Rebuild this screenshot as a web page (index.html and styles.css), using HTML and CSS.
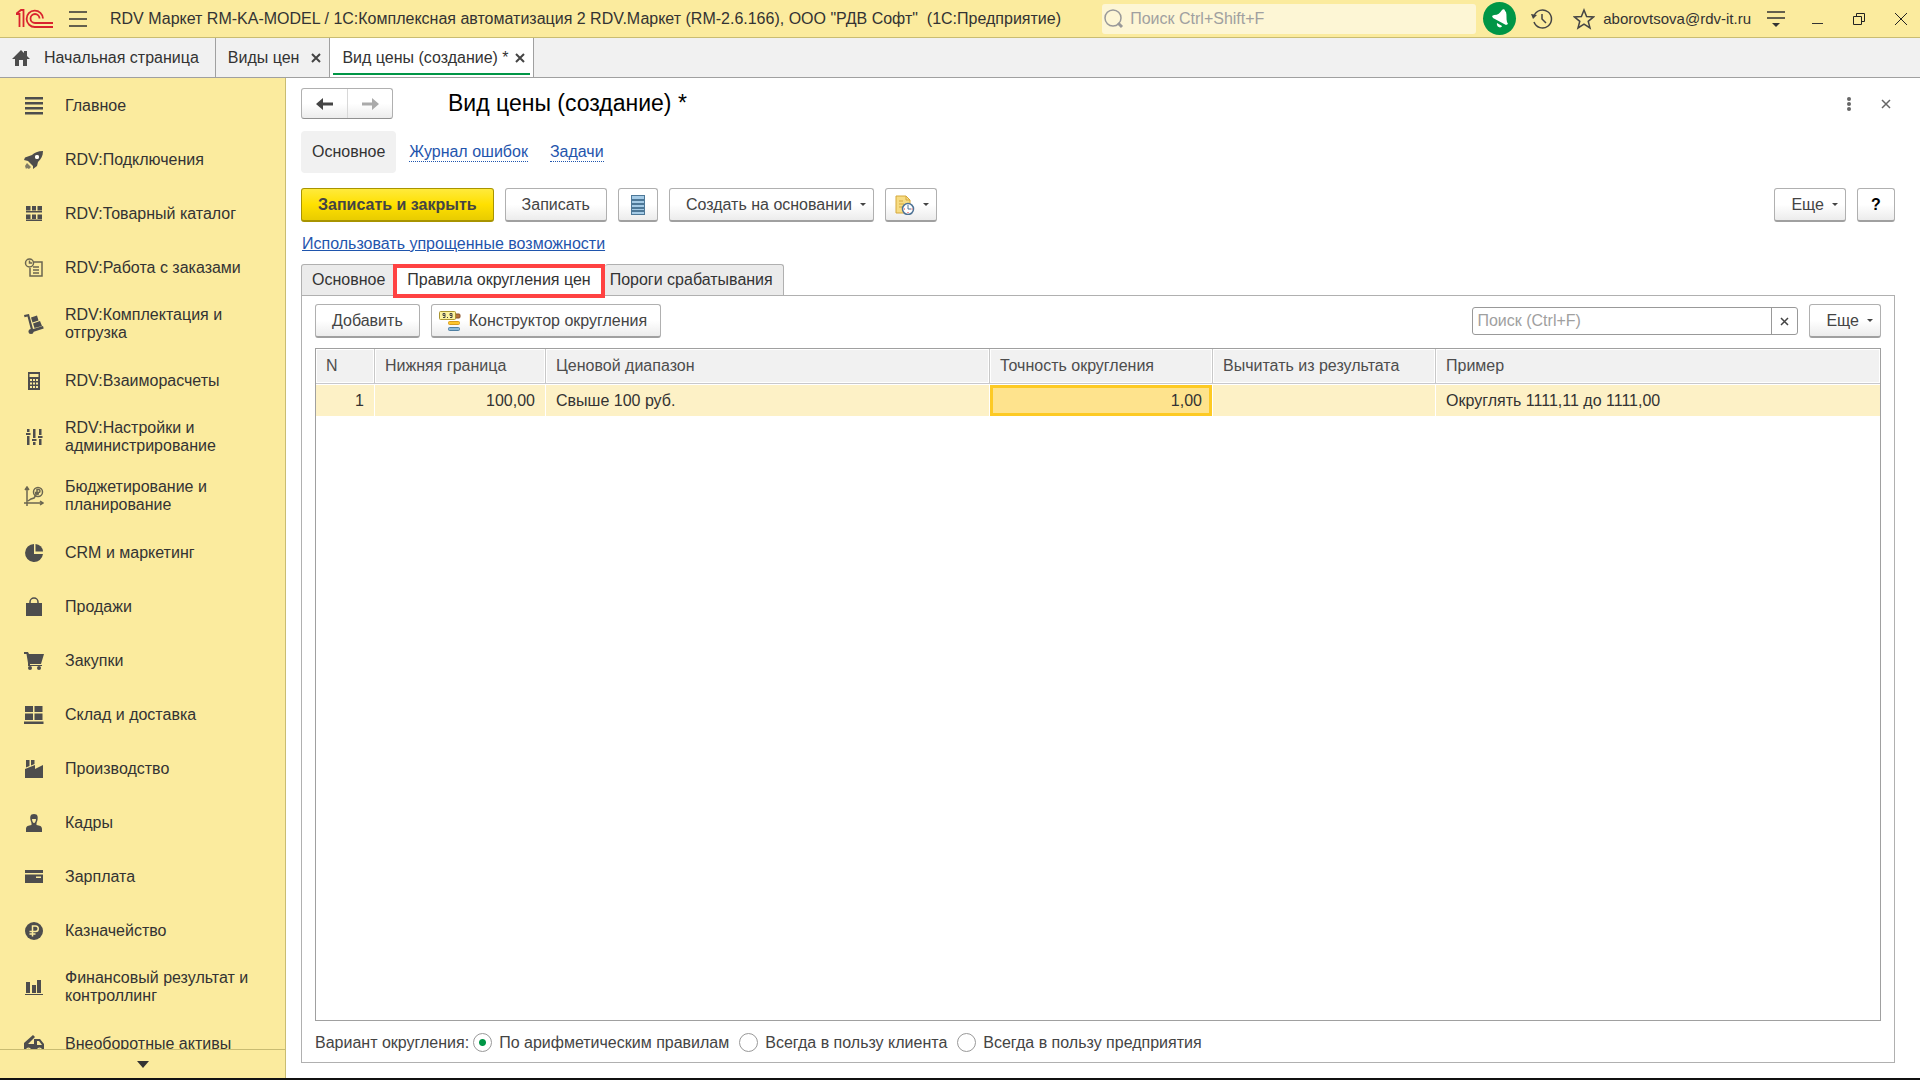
FILE: index.html
```
<!DOCTYPE html>
<html lang="ru">
<head>
    <meta charset="UTF-8">
    <title>Вид цены (создание)</title>
    <link rel="stylesheet" href="styles.css">
</head>
<body>
    <header class="topbar">
        <svg class="logo" width="38" height="20" viewBox="0 0 38 20" fill="none" stroke="#d9232e" stroke-width="1.800">
            <path d="M0 5h3.500v13M0 5l5-4h2.500v17"/>
            <path d="M27 9.500a8.200 8.200 0 1 0-8 8.500h18"/>
            <path d="M23.500 9.500a4.500 4.500 0 1 0-4.500 4.500h18"/>
        </svg>
        <button class="icon-btn burger" aria-label="Меню">
            <svg width="18" height="16" viewBox="0 0 18 16" stroke="#333" stroke-width="1.500"><path d="M0 1h18M0 8h18M0 15h18"/></svg>
        </button>
        <span class="app-title">RDV Маркет RM-KA-MODEL / 1С:Комплексная автоматизация 2 RDV.Маркет (RM-2.6.166), ООО "РДВ Софт"&nbsp; (1С:Предприятие)</span>
        <label class="global-search">
            <svg width="20" height="20" viewBox="0 0 20 20" fill="none" stroke="#999" stroke-width="1.500"><circle cx="9" cy="9" r="8"/><path d="M14 14l4 4" stroke-width="3"/></svg>
            <input type="text" placeholder="Поиск Ctrl+Shift+F" aria-label="Поиск">
        </label>
        <div class="top-tools">
            <button class="icon-btn bell" aria-label="Уведомления">
                <svg width="20" height="22" viewBox="0 0 20 22" fill="#fff"><path d="M12 2c1-1.500 3-1 3 1l1 1c1 3 0 7 1 10l1 2-2 1L3 10l-1-2 2-1c4 0 6-2 8-5zM7 15l5 3c-1 3-6 1-5-3z"/></svg>
            </button>
            <button class="icon-btn" aria-label="История">
                <svg width="22" height="22" viewBox="0 0 22 22" fill="none" stroke="#444" stroke-width="1.500"><path d="M3 8a9 9 0 1 1 0 6"/><path d="M11 6v5l4 4"/><path d="M0 6l6 1-4 4z" fill="#444" stroke="none"/></svg>
            </button>
            <button class="icon-btn" aria-label="Избранное">
                <svg width="22" height="22" viewBox="0 0 22 22" fill="none" stroke="#444" stroke-width="1.500"><path d="M11 2l2.600 6.500 7 .4-5.400 4.400 1.800 6.700-6-3.800L5 20l1.800-6.700L1.400 8.900l7-.4z"/></svg>
            </button>
            <a class="user" href="#">aborovtsova@rdv-it.ru</a>
            <button class="icon-btn" aria-label="Настройки">
                <svg width="18" height="18" viewBox="0 0 18 18" stroke="#333" stroke-width="1.500"><path d="M0 2h18M0 8h18"/><path d="M5 13h8l-4 4z" fill="#333" stroke="none"/></svg>
            </button>
        </div>
        <div class="window-tools">
            <button class="icon-btn" aria-label="Свернуть">
                <svg width="12" height="12" viewBox="0 0 12 12" stroke="#333"><path d="M0 10.500h11"/></svg>
            </button>
            <button class="icon-btn" aria-label="Развернуть">
                <svg width="12" height="12" viewBox="0 0 12 12" fill="none" stroke="#222"><path d="M.5 3.500h8v8h-8zM3.500 3V.5h8v8H9"/></svg>
            </button>
            <button class="icon-btn" aria-label="Закрыть">
                <svg width="14" height="14" viewBox="0 0 14 14" stroke="#222"><path d="M1 1l12 12M13 1L1 13"/></svg>
            </button>
        </div>
    </header>

    <nav class="tabs">
        <div class="tab">
            <svg width="18" height="16" viewBox="0 0 18 16" fill="#4d4d4d"><path d="M9 0L0 9h3v7h4v-6h4v6h4V9h3l-3-3V1h-3v2z"/></svg>
            <a href="#">Начальная страница</a>
        </div>
        <div class="tab">
            <a href="#">Виды цен</a>
            <button class="icon-btn" aria-label="Закрыть вкладку"><svg width="10" height="10" viewBox="0 0 10 10" stroke="#444" stroke-width="2"><path d="M1 1l8 8M9 1L1 9"/></svg></button>
        </div>
        <div class="tab active">
            <a href="#">Вид цены (создание) *</a>
            <button class="icon-btn" aria-label="Закрыть вкладку"><svg width="10" height="10" viewBox="0 0 10 10" stroke="#444" stroke-width="2"><path d="M1 1l8 8M9 1L1 9"/></svg></button>
        </div>
    </nav>

    <div class="layout">
        <aside class="sidebar">
            <ul class="menu">
                <li><a href="#"><svg viewBox="0 0 20 20"><path d="M1 1h18v2.500H1zM1 6h18v2.500H1zM1 11h18v2.500H1zM1 16h18v2.500H1z"/></svg>Главное</a></li>
                <li><a href="#"><svg viewBox="0 0 20 20"><path fill-rule="evenodd" d="M19 1c-5 0-9 2-11 4L1 7.500 0 10l4 1 5 5v3l4-3 1-4c3-3 5-6 5-11zM13 5a2 2 0 1 1 0 4 2 2 0 0 1 0-4z"/><circle cx="13" cy="7" r="2" style="fill:#fff"/><path d="M3 13l4 4-2 2-2-1-1 1-1-3z" opacity=".7"/></svg>RDV:Подключения</a></li>
                <li><a href="#"><svg viewBox="0 0 20 20"><path d="M2 2h4.500v4.500H2zM8 2h4v4.500H8zM13.500 2H18v4.500h-4.500zM2 7h16v1.500H2zM2 10.500h4.500V15H2zM8 10.500h4V15H8zM13.500 10.500H18V15h-4.500zM2 15.500h16V17H2z"/></svg>RDV:Товарный каталог</a></li>
                <li><a href="#"><svg class="line" viewBox="0 0 20 20"><path d="M10 4h8v14H6v-8M9 9h6M9 12h6M9 15h6"/><circle cx="5.500" cy="5" r="4"/><path d="M5.500 2.500V5H8"/></svg>RDV:Работа с заказами</a></li>
                <li><a href="#"><svg viewBox="0 0 20 20"><path d="M0 1l5-1 4 15 10-3 .7 2.500L9 18l-2-2L3.500 2.500.5 3.300zM7 3.500l6-2 1.500 5-6 2zM9 9.500l7-2.500 2 5-7.500 2z"/><circle cx="7" cy="17.500" r="2.500"/></svg>RDV:Комплектация и отгрузка</a></li>
                <li><a href="#"><svg viewBox="0 0 20 20"><path fill-rule="evenodd" d="M4 1h12v18H4zM5.500 3v3h9V3zM6 8v2h2V8zM9 8v2h2V8zM12 8v2h2V8zM6 11.500v2h2v-2zM9 11.500v2h2v-2zM12 11.500v2h2v-2zM6 15v2h2v-2zM9 15v2h2v-2zM12 15v2h2v-2z"/></svg>RDV:Взаиморасчеты</a></li>
                <li><a href="#"><svg viewBox="0 0 20 20"><path d="M3 2h2.500v3H3zM2 6h4.500v2H2zM3 9h2.500v9H3zM9 2h2.500v9H9zM8 12h4.500v2H8zM9 15h2.500v3H9zM15 2h2.500v6H15zM14 9h4.500v2H14zM15 12h2.500v6H15z"/></svg>RDV:Настройки и администрирование</a></li>
                <li><a href="#"><svg class="line" viewBox="0 0 20 20"><path d="M3 20V2M1 4l2-3 2 3M0 17h18M16 15l3 2-3 2M4 15l3-2 3-1 2-3"/><circle cx="14" cy="6" r="4.500"/><path d="M13 9V3.500h1.500a1.500 1.500 0 0 1 0 3H11M11 8h4"/></svg>Бюджетирование и планирование</a></li>
                <li><a href="#"><svg viewBox="0 0 20 20"><path d="M10 1v10h9A9 9 0 1 1 10 1z"/><path d="M11.500 1a8 8 0 0 1 7.500 7.500h-7.500z"/></svg>CRM и маркетинг</a></li>
                <li><a href="#"><svg viewBox="0 0 20 20"><path d="M2 6h16v13H2z"/><path class="handle" d="M6 6V5a4 4 0 0 1 8 0v1"/></svg>Продажи</a></li>
                <li><a href="#"><svg viewBox="0 0 20 20"><path d="M0 1h4l1 2h15l-3 10H6v1h12v1H4V12L2.500 3H0z"/><circle cx="6" cy="17" r="2"/><circle cx="15" cy="17" r="2"/></svg>Закупки</a></li>
                <li><a href="#"><svg viewBox="0 0 20 20"><path d="M1 1h8v6H1zM10.500 1h8v6h-8zM1 8.500h8V15H1zM10.500 8.500h8V15h-8zM0 16.500h19.500V19H0z"/></svg>Склад и доставка</a></li>
                <li><a href="#"><svg viewBox="0 0 20 20"><path d="M1 10l10-4v4l8-4v13H1zM2 1h3.500v6L2 8.500zM7 1h3.500v4L7 6.500z"/></svg>Производство</a></li>
                <li><a href="#"><svg viewBox="0 0 20 20"><path fill-rule="evenodd" d="M10 1c4 0 4 3 3.500 6-.3 1.500-1 2.500-1 3.500v1.500c3 .5 5.500 1 5.500 4v3H2v-3c0-3 2.500-3.500 5.500-4v-1.500c0-1-.7-2-1-3.500C6 4 6 1 10 1zM8 6c0 2 1 4 2 4s2-2 2-4z"/></svg>Кадры</a></li>
                <li><a href="#"><svg viewBox="0 0 20 20"><path fill-rule="evenodd" d="M1 3h18v3H1zM1 7.500h18V16H1zM12 9.500V11h5V9.500z"/></svg>Зарплата</a></li>
                <li><a href="#"><svg viewBox="0 0 20 20"><circle cx="10" cy="10" r="9"/><path class="ruble" d="M8.500 15.500V5h3a2.700 2.700 0 0 1 0 5.500H5.500M5.500 13h6"/></svg>Казначейство</a></li>
                <li><a href="#"><svg viewBox="0 0 20 20"><path d="M2 5h4v11H2zM8 8h4v8H8zM13 3h4v13h-4zM1 17h18v1H1z"/></svg>Финансовый результат и контроллинг</a></li>
                <li><a href="#"><svg viewBox="0 0 20 20"><path fill-rule="evenodd" d="M0 9l9-8 2 2-7 7h6V5h6l4 5v6h-2a2.500 2.500 0 0 0-5 0H7a2.500 2.500 0 0 0-5 0H0zM13 7v4h5l-3-4z"/><circle cx="4.500" cy="16.500" r="1.800"/><circle cx="15.500" cy="16.500" r="1.800"/></svg>Внеоборотные активы</a></li>
            </ul>
            <button class="menu-more" aria-label="Прокрутить вниз">
                <svg width="12" height="7" viewBox="0 0 12 7" fill="#333"><path d="M0 0h12L6 7z"/></svg>
            </button>
        </aside>

        <main class="content">
            <div class="title-row">
                <div class="history">
                    <button aria-label="Назад"><svg width="18" height="14" viewBox="0 0 18 14" fill="#444"><path d="M0 7l7-6v4.500h10v3H7V13z"/></svg></button>
                    <button aria-label="Вперед" disabled><svg width="18" height="14" viewBox="0 0 18 14" fill="#aaa"><path d="M18 7l-7-6v4.500H1v3h10V13z"/></svg></button>
                </div>
                <h1>Вид цены (создание) *</h1>
                <button class="icon-btn" aria-label="Дополнительно"><svg width="4" height="14" viewBox="0 0 4 14" fill="#666"><circle cx="2" cy="2" r="2"/><circle cx="2" cy="7" r="2"/><circle cx="2" cy="12" r="2"/></svg></button>
                <button class="icon-btn" aria-label="Закрыть форму"><svg width="10" height="10" viewBox="0 0 10 10" stroke="#666" stroke-width="1.500"><path d="M1 1l8 8M9 1L1 9"/></svg></button>
            </div>

            <nav class="form-nav">
                <a class="current" href="#">Основное</a>
                <a href="#">Журнал ошибок</a>
                <a href="#">Задачи</a>
            </nav>

            <div class="toolbar">
                <button class="btn primary">Записать и закрыть</button>
                <button class="btn">Записать</button>
                <button class="btn icon-only" aria-label="Список">
                    <svg width="14" height="20" viewBox="0 0 14 20"><path fill="#4d7898" d="M0 0h14v20H0z"/><path fill="#a5cbe6" d="M1 1h12v3H1zM1 6h12v2H1zM1 10h12v2H1zM1 14h12v1H1zM1 17h12v2H1z"/></svg>
                </button>
                <button class="btn drop">Создать на основании</button>
                <button class="btn drop clock" aria-label="Напоминание">
                    <svg width="20" height="20" viewBox="0 0 20 20"><path d="M1 1h10l4 4v13H1z" fill="#f7dc83" stroke="#d5a83c"/><path d="M11 1v4h4M4 6h4M4 9h5M4 12h3" fill="none" stroke="#d5a83c"/><circle cx="13" cy="14" r="5.500" fill="#fff" stroke="#4e7396" stroke-width="1.500"/><path d="M13 10v4h3" fill="none" stroke="#4e7396"/><path d="M12.500 17h1v1h-1zM9 13.500h1v1H9zM16.500 13.500h1v1h-1z" fill="#e33"/></svg>
                </button>
                <div class="right">
                    <button class="btn drop">Еще</button>
                    <button class="btn help">?</button>
                </div>
            </div>

            <a class="simple-link" href="#">Использовать упрощенные возможности</a>

            <div class="page-tabs">
                <button>Основное</button>
                <button class="marked">Правила округления цен</button>
                <button>Пороги срабатывания</button>
            </div>

            <section class="panel">
                <div class="toolbar">
                    <button class="btn">Добавить</button>
                    <button class="btn with-icon">
                        <svg width="22" height="22" viewBox="0 0 22 22"><rect x="14" y="4" width="7" height="4" rx="1" fill="#b5733f" stroke="#8a5228"/><rect x=".5" y="1.500" width="16" height="8" rx="1" fill="#fdf3a0" stroke="#a99532"/><path d="M4 7.500h2V3.500H4v2h2M11 7.500h2V3.500h-2v2h2" fill="none" stroke="#444"/><path d="M8 7h1v1H8z" fill="#444"/><rect x="9.500" y="11.500" width="11" height="3" rx="1" fill="#fdc62c" stroke="#d69c1e"/><rect x="9.500" y="17.500" width="11" height="3" rx="1" fill="#8ab9d8" stroke="#4e7fa2"/></svg>
                        Конструктор округления
                    </button>
                    <div class="right">
                        <div class="search">
                            <input type="text" placeholder="Поиск (Ctrl+F)" aria-label="Поиск в таблице">
                            <button aria-label="Очистить"><svg width="9" height="9" viewBox="0 0 9 9" stroke="#444" stroke-width="1.500"><path d="M1 1l7 7M8 1L1 8"/></svg></button>
                        </div>
                        <button class="btn drop">Еще</button>
                    </div>
                </div>

                <div class="grid">
                    <table>
                        <thead>
                            <tr>
                                <th class="c-num">N</th>
                                <th class="c-low">Нижняя граница</th>
                                <th class="c-range">Ценовой диапазон</th>
                                <th class="c-mid">Точность округления</th>
                                <th class="c-mid">Вычитать из результата</th>
                                <th>Пример</th>
                            </tr>
                        </thead>
                        <tbody>
                            <tr>
                                <td class="num">1</td>
                                <td class="num">100,00</td>
                                <td>Свыше 100 руб.</td>
                                <td class="num focused">1,00</td>
                                <td></td>
                                <td>Округлять 1111,11 до 1111,00</td>
                            </tr>
                        </tbody>
                    </table>
                </div>

                <div class="variants" role="radiogroup" aria-labelledby="variant">
                    <span id="variant">Вариант округления:</span>
                    <label><input type="radio" name="variant" checked>По арифметическим правилам</label>
                    <label><input type="radio" name="variant">Всегда в пользу клиента</label>
                    <label><input type="radio" name="variant">Всегда в пользу предприятия</label>
                </div>
            </section>
        </main>
    </div>
</body>
</html>
```
FILE: styles.css
```
*{
    margin: 0;
    padding: 0;
    box-sizing: border-box;
}
body{
    display: flex;
    flex-direction: column;
    height: 100vh;
    border-bottom: 2px solid #111;
    background-color: #fff;
    color: #333;
    font: 16px/18px "Liberation Sans", Arial, sans-serif;
}
button, input{
    font: inherit;
    color: inherit;
}
button{
    border: 0;
    background: none;
}
a{
    color: inherit;
    text-decoration: none;
}
ul{
    list-style: none;
}
svg{
    display: block;
    flex-shrink: 0;
}
.icon-btn{
    display: flex;
    align-items: center;
    justify-content: center;
}

/* top bar */
.topbar{
    display: flex;
    align-items: center;
    height: 38px;
    flex-shrink: 0;
    padding: 0 12px 0 16px;
    background-color: #fbeb9e;
    border-bottom: 1px solid #c9bc72;
}
.burger{
    margin: 0 23px 0 15px;
}
.app-title{
    flex: 1;
    white-space: nowrap;
}
.global-search{
    display: flex;
    align-items: center;
    gap: 6px;
    width: 374px;
    height: 30px;
    padding-left: 2px;
    border-radius: 3px;
    background-color: #fdf6d5;
}
.global-search input{
    flex: 1;
    min-width: 0;
    border: 0;
    outline: 0;
    background: none;
}
input::placeholder{
    color: #a0a0a0;
    opacity: 1;
}
.top-tools{
    display: flex;
    align-items: center;
    gap: 20px;
    margin-left: 7px;
}
.bell{
    width: 33px;
    height: 33px;
    margin-right: -5px;
    border-radius: 50%;
    background-color: #009646;
}
.user{
    margin: 0 -4px 0 -12px;
    font-size: 15px;
}
.window-tools{
    display: flex;
    gap: 29px;
    margin-left: 27px;
}

/* open windows */
.tabs{
    display: flex;
    height: 40px;
    flex-shrink: 0;
    background-color: #f1f1f1;
    border-bottom: 1px solid #a0a0a0;
}
.tab{
    display: flex;
    align-items: center;
    gap: 12px;
    padding: 0 8px 0 12px;
    border-right: 1px solid #a0a0a0;
}
.tab:first-child{
    gap: 14px;
    padding-right: 16px;
}
.tab.active{
    gap: 6px;
    position: relative;
    background-color: #fff;
}
.tab.active::after{
    content: "";
    position: absolute;
    left: 3px;
    right: 3px;
    bottom: 2px;
    height: 2px;
    background-color: #009646;
}

.layout{
    display: flex;
    flex: 1;
    min-height: 0;
}

/* sections */
.sidebar{
    display: flex;
    flex-direction: column;
    width: 286px;
    flex-shrink: 0;
    background-color: #fbeb9e;
    border-right: 1px solid #c9bc72;
}
.menu{
    flex: 1;
    min-height: 0;
    overflow: hidden;
}
.menu a{
    display: flex;
    align-items: center;
    gap: 21px;
    min-height: 54px;
    padding: 12px 30px 11px 24px;
}
.menu svg{
    width: 20px;
    height: 20px;
    fill: #4d4d4d;
}
.menu .line{
    fill: none;
    stroke: #6b6650;
    stroke-width: 1.5;
}
.menu .handle{
    fill: none;
    stroke: #4d4d4d;
    stroke-width: 1.5;
}
.menu .ruble{
    fill: none;
    stroke: #fbeb9e;
    stroke-width: 1.5;
}
.menu-more{
    display: flex;
    align-items: center;
    justify-content: center;
    height: 29px;
    border-top: 1px solid #c9bc72;
}

/* form */
.content{
    display: flex;
    flex-direction: column;
    flex: 1;
    min-width: 0;
    padding: 10px 25px 15px 15px;
}
.title-row{
    display: flex;
    align-items: center;
    height: 31px;
    gap: 30px;
    padding-right: 4px;
}
.history{
    display: flex;
    height: 31px;
    border: 1px solid #b0b0b0;
    border-bottom-color: #909090;
    border-radius: 3px;
    background: linear-gradient(#fff 50%, #ececec);
}
.history button{
    display: flex;
    align-items: center;
    justify-content: center;
    width: 45px;
}
.history button + button{
    border-left: 1px solid #d8d8d8;
}
h1{
    flex: 1;
    padding: 0 0 2px 25px;
    color: #000;
    font-size: 23px;
    font-weight: normal;
    line-height: 28px;
}
.form-nav{
    display: flex;
    align-items: center;
    gap: 22px;
    height: 42px;
    margin-top: 12px;
}
.form-nav a{
    color: #1f55ad;
    border-bottom: 1px dotted #1f55ad;
}
.form-nav .current{
    margin-right: -9px;
    padding: 12px 11px;
    border: 0;
    border-radius: 4px;
    background-color: #f1f1f1;
    color: #333;
}
.toolbar{
    display: flex;
    align-items: center;
    gap: 11px;
}
.form-nav + .toolbar{
    margin-top: 15px;
}
.right{
    display: flex;
    align-items: center;
    gap: 11px;
    margin-left: auto;
}
.btn{
    display: flex;
    align-items: center;
    justify-content: center;
    height: 34px;
    padding: 0 16px;
    border: 1px solid #b0b0b0;
    border-bottom: 2px solid #a0a0a0;
    border-radius: 3px;
    background: linear-gradient(#fff 50%, #ececec);
    color: #444;
    white-space: nowrap;
}
.primary{
    border-color: #a89400;
    background: linear-gradient(#ffea3c, #ffe000 50%, #e8cc00);
    font-weight: bold;
}
.icon-only{
    padding: 0 12px;
}
.drop{
    gap: 8px;
    padding-right: 7px;
}
.drop::after{
    content: "";
    border: 3px solid transparent;
    border-top-color: #444;
    border-bottom: 0;
}
.clock{
    padding-left: 9px;
}
.help{
    width: 38px;
    color: #000;
    font-weight: bold;
}
.with-icon{
    gap: 8px;
    padding: 0 13px 0 7px;
}
.simple-link{
    align-self: flex-start;
    margin: 13px 0 0 1px;
    color: #1f55ad;
    text-decoration: underline;
}

/* form pages */
.page-tabs{
    display: flex;
    height: 31px;
    margin-top: 11px;
}
.page-tabs button{
    padding: 0 10px;
    border: 1px solid #b0b0b0;
    border-bottom: 0;
    border-radius: 3px 3px 0 0;
    background-color: #ebebeb;
}
.page-tabs button:last-child{
    padding-left: 5px;
    border-left: 0;
}
.page-tabs .marked{
    position: relative;
    height: 34px;
    margin-left: -3px;
    padding-bottom: 2px;
    border: 4px solid #ff4242;
    border-radius: 0;
    background-color: #fff;
}
.panel{
    display: flex;
    flex-direction: column;
    flex: 1;
    min-height: 0;
    padding: 8px 13px 0;
    border: 1px solid #b0b0b0;
}
.search{
    display: flex;
    width: 326px;
    height: 28px;
    border: 1px solid #999;
    border-radius: 3px;
}
.search input{
    flex: 1;
    min-width: 0;
    padding: 0 4px;
    border: 0;
    outline: 0;
    background: none;
}
.search button{
    display: flex;
    align-items: center;
    justify-content: center;
    width: 26px;
    border-left: 1px solid #999;
}
.grid{
    flex: 1;
    min-height: 0;
    margin-top: 10px;
    border: 1px solid #a0a0a0;
}
table{
    width: 100%;
    table-layout: fixed;
    border-collapse: separate;
    border-spacing: 0;
}
th, td{
    padding: 0 10px;
    text-align: left;
    font-weight: normal;
    white-space: nowrap;
}
th{
    height: 35px;
    border-right: 1px solid #c8c8c8;
    border-bottom: 1px solid #c8c8cc;
    background-color: #f1f1f1;
    box-shadow: inset 0 0 0 1px #fff;
    color: #4d4d4d;
}
td{
    height: 32px;
    border-top: 1px solid #fff;
    border-right: 1px solid #fff;
    background-color: #fdf1c6;
}
th:last-child, td:last-child{
    border-right: 0;
}
.c-num{
    width: 59px;
}
.c-low{
    width: 171px;
}
.c-range{
    width: 444px;
}
.c-mid{
    width: 223px;
}
.num{
    text-align: right;
}
.focused{
    background-color: #fee38d;
    box-shadow: inset 0 0 0 3px #fdca24;
}
.variants{
    display: flex;
    align-items: center;
    height: 41px;
    gap: 10px;
    padding-top: 2px;
    color: #444;
}
.variants span{
    margin-right: -6px;
}
.variants label{
    display: flex;
    align-items: center;
    gap: 7px;
}
.variants input{
    width: 19px;
    height: 19px;
    border: 1px solid #999;
    border-radius: 50%;
    appearance: none;
    background-color: #fff;
}
.variants input:checked{
    background-image: radial-gradient(#009646 3px, transparent 4px);
}
```
